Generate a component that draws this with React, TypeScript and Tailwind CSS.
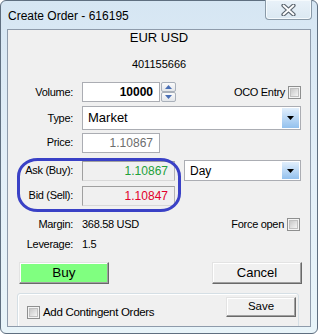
import React from "react";

const F = "font-['Liberation_Sans',Arial,sans-serif]";

function Checkbox() {
  return (
    <div className="w-[13px] h-[13px] border border-[#8e8f8f] bg-[#f4f4f4] p-[1px] shrink-0">
      <div className="w-full h-full bg-gradient-to-br from-[#c8c8c8] to-[#f4f4f4] border border-[#c0c0c0]" />
    </div>
  );
}

function DropBtn() {
  return (
    <div className="w-[17px] h-full bg-gradient-to-b from-[#e2effc] to-[#93c1ee] flex items-center justify-center">
      <svg width="7" height="4" viewBox="0 0 7 4">
        <path d="M0 0H7L3.5 4Z" fill="#000" />
      </svg>
    </div>
  );
}

function Spin({ up }: { up?: boolean }) {
  return (
    <div className="h-[10px] w-[15px] border border-[#a9b0ba] rounded-[2px] bg-gradient-to-b from-[#fbfbfb] to-[#e3e6ea] flex items-center justify-center">
      <svg width="7" height="4" viewBox="0 0 7 4">
        {up ? <path d="M0 4H7L3.5 0Z" fill="#4a6fb5" /> : <path d="M0 0H7L3.5 4Z" fill="#4a6fb5" />}
      </svg>
    </div>
  );
}

function Btn({ children, cls }: { children: React.ReactNode; cls: string }) {
  return (
    <div
      className={`flex items-center justify-center border border-t-[#e3e3e3] border-l-[#e3e3e3] border-b-[#696969] border-r-[#696969] shadow-[inset_-1px_-1px_0_#a0a0a0,inset_1px_1px_0_#ffffff] ${cls}`}
    >
      {children}
    </div>
  );
}

export default function App() {
  return (
    <div className={`w-[318px] h-[334px] bg-white ${F} text-[11px] tracking-[-0.3px] text-black`}>
      <div className="w-[318px] h-[334px] flex flex-col border border-[#5f6f80] rounded-[6px] bg-gradient-to-b from-[#d6e6f3] via-[#e3eff8] to-[#e8f4f9] px-[6px] pb-[6px] relative">
        {/* title bar */}
        <div className="h-[28px] shrink-0 relative">
          <div className="pt-[7px] pl-[1px] text-[12px] leading-[16px] tracking-normal">Create Order - 616195</div>
          <div className="absolute right-[-1px] top-[-1px] w-[47px] h-[20px] border border-t-0 border-[#8a9aa8] rounded-b-[4px] bg-gradient-to-b from-[#e9f2f9] to-[#dbe8f2] shadow-[inset_0_0_0_1px_#f5fafd] flex items-center justify-center">
            <svg width="15" height="12" viewBox="0 0 15 12">
              <path d="M2.5 1.5L12.5 10.5M12.5 1.5L2.5 10.5" stroke="#5c6670" strokeWidth="4.2" strokeLinecap="round" />
              <path d="M2.5 1.5L12.5 10.5M12.5 1.5L2.5 10.5" stroke="#ffffff" strokeWidth="1.8" strokeLinecap="round" />
            </svg>
          </div>
        </div>
        {/* panel */}
        <div className="h-[298px] border border-[#8e9bab] bg-[#f0f0f0] relative overflow-hidden flex flex-col">
          <div className="h-[15px] leading-[15px] text-center text-[13px] tracking-normal">EUR USD</div>
          <div className="mt-[12px] h-[14px] leading-[14px] text-center text-[11px] tracking-normal">401155666</div>

          {/* Volume */}
          <div className="mt-[11px] h-[21px] flex items-center">
            <div className="w-[65px] text-right">Volume:</div>
            <div className="ml-[9px] w-[78px] h-full border border-[#abadb3] bg-white flex items-center justify-end pr-[6px] text-[12px] font-bold tracking-normal">
              10000
            </div>
            <div className="ml-[1px] h-full flex flex-col justify-between">
              <Spin up />
              <Spin />
            </div>
            <div className="ml-auto mr-[9px] flex items-center gap-[3px]">
              <span>OCO Entry</span>
              <Checkbox />
            </div>
          </div>

          {/* Type */}
          <div className="mt-[4px] h-[24px] flex items-center">
            <div className="w-[65px] text-right">Type:</div>
            <div className="ml-[9px] w-[219px] h-full border border-[#abadb3] bg-white flex items-center p-[1px]">
              <span className="flex-1 pl-[4px] text-[13px] tracking-normal">Market</span>
              <DropBtn />
            </div>
          </div>

          {/* Price */}
          <div className="mt-[3px] h-[21px] flex items-center">
            <div className="w-[65px] text-right">Price:</div>
            <div className="ml-[9px] w-[78px] h-full border border-[#abadb3] bg-white flex items-center justify-end pr-[6px] text-[12px] text-[#6d6d6d] tracking-normal">
              1.10867
            </div>
          </div>

          {/* Ask */}
          <div className="mt-[8px] h-[20px] flex items-center">
            <div className="w-[65px] text-right">Ask (Buy):</div>
            <div className="ml-[9px] w-[93px] h-full border border-[#a0a0a0] border-b-[#d8d8d8] border-r-[#b4b4b4] flex items-center justify-end pr-[6px] text-[12px] text-[#22a03a] tracking-normal">
              1.10867
            </div>
            <div className="ml-[9px] w-[117px] h-[21px] border border-[#abadb3] bg-white flex items-center p-[1px]">
              <span className="flex-1 pl-[4px] text-[12px] tracking-normal">Day</span>
              <DropBtn />
            </div>
          </div>

          {/* Bid */}
          <div className="mt-[5px] h-[20px] flex items-center">
            <div className="w-[65px] text-right">Bid (Sell):</div>
            <div className="ml-[9px] w-[93px] h-full border border-[#a0a0a0] border-b-[#d8d8d8] border-r-[#b4b4b4] flex items-center justify-end pr-[6px] text-[12px] text-[#e2002c] tracking-normal">
              1.10847
            </div>
          </div>

          {/* Margin */}
          <div className="mt-[12px] h-[14px] flex items-center">
            <div className="w-[65px] text-right">Margin:</div>
            <div className="ml-[9px]">368.58 USD</div>
            <div className="ml-auto mr-[10px] flex items-center gap-[3px]">
              <span>Force open</span>
              <Checkbox />
            </div>
          </div>

          {/* Leverage */}
          <div className="mt-[6px] h-[14px] flex items-center">
            <div className="w-[65px] text-right">Leverage:</div>
            <div className="ml-[9px]">1.5</div>
          </div>

          {/* Buttons */}
          <div className="mt-[10px] h-[24px] flex items-center">
            <Btn cls="ml-[11px] w-[90px] h-full bg-[#80ff80]">
              <span className="text-[13.5px] tracking-normal">Buy</span>
            </Btn>
            <Btn cls="ml-auto mr-[8px] w-[90px] h-full bg-[#f0f0f0]">
              <span className="text-[13px] tracking-normal">Cancel</span>
            </Btn>
          </div>

          {/* group box */}
          <div className="mt-[9px] ml-[9px] w-[282px] h-[40px] shrink-0 border border-[#d5dfe5] rounded-[3px] shadow-[inset_1px_1px_0_#ffffff] flex items-start pt-[3px]">
            <div className="mt-[7px] ml-[9px] flex items-center gap-[3px]">
              <Checkbox />
              <span className="text-[11.5px]">Add Contingent Orders</span>
            </div>
            <Btn cls="ml-auto mr-[2px] w-[70px] h-[20px] bg-[#f0f0f0]">
              <span className="text-[11.5px] tracking-normal">Save</span>
            </Btn>
          </div>

          {/* annotation ellipse */}
          <svg className="absolute left-[9px] top-[128px]" width="164" height="54" viewBox="0 0 164 54">
            <rect x="1.5" y="1.5" width="161" height="51" rx="19" ry="17" fill="none" stroke="#3a41c6" strokeWidth="3" />
          </svg>
        </div>
      </div>
    </div>
  );
}
